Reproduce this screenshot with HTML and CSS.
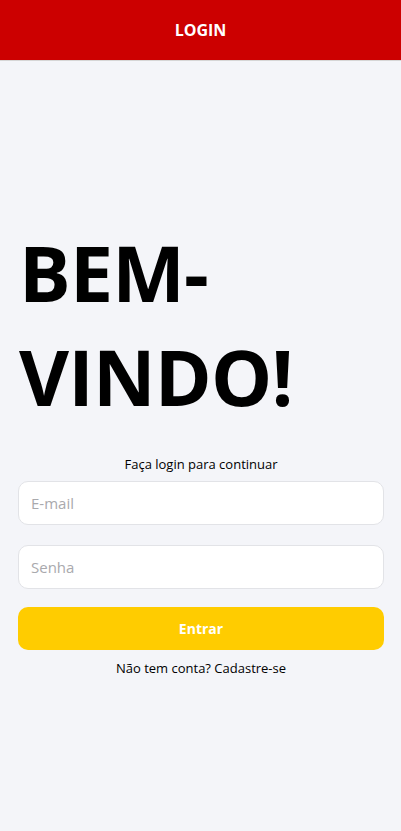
FILE: index.html
```html
<!DOCTYPE html>
<html lang="pt-BR">
<head>
<meta charset="utf-8">
<title>Login</title>
<link rel="stylesheet" href="styles.css">
</head>
<body>
<header class="topbar"><h1 class="topbar-title">LOGIN</h1></header>
<main class="content">
  <h2 class="welcome">BEM-<br>VINDO!</h2>
  <p class="subtitle">Faça login para continuar</p>
  <form class="form">
    <input class="field" type="email" placeholder="E-mail">
    <input class="field" type="password" placeholder="Senha">
    <button class="submit" type="button">Entrar</button>
  </form>
  <p class="signup">Não tem conta? Cadastre-se</p>
</main>
</body>
</html>
```

FILE: styles.css
```css
* { box-sizing: border-box; }
html, body { margin: 0; padding: 0; }
body {
  background: #f4f5f9;
  font-family: "Open Sans", "Noto Sans", sans-serif;
  color: #000;
  min-height: 831px;
}
.topbar {
  height: 61px;
  background: #cc0000;
  border-bottom: 1px solid #d6d6d6;
  display: flex;
  align-items: center;
  justify-content: center;
}
.topbar-title {
  margin: 0;
  color: #fff;
  font-size: 16px;
  font-weight: 700;
  letter-spacing: 0;
}
.content {
  padding: 0 17px 0 18px;
  display: flex;
  flex-direction: column;
}
.welcome {
  margin: 160px 0 0 1px;
  font-size: 77px;
  line-height: 104px;
  font-weight: 700;
  letter-spacing: -0.8px;
}
.subtitle {
  margin: 26px 0 0;
  text-align: center;
  font-size: 13px;
  line-height: 18px;
}
.form {
  margin-top: 8px;
  display: flex;
  flex-direction: column;
}
.field {
  height: 44px;
  border: 1px solid #e2e3e7;
  border-radius: 10px;
  background: #fff;
  padding: 0 12px;
  font-family: inherit;
  font-size: 15px;
  margin-bottom: 20px;
  outline: none;
}
.field::placeholder { color: #a9a9ad; }
.field:nth-child(2) { margin-bottom: 18px; }
.submit {
  height: 43px;
  border: none;
  border-radius: 10px;
  background: #ffcc00;
  color: #fff;
  font-family: inherit;
  font-size: 14px;
  font-weight: 700;
}
.signup {
  margin: 9px 0 0;
  text-align: center;
  font-size: 13px;
  line-height: 18px;
}
```
